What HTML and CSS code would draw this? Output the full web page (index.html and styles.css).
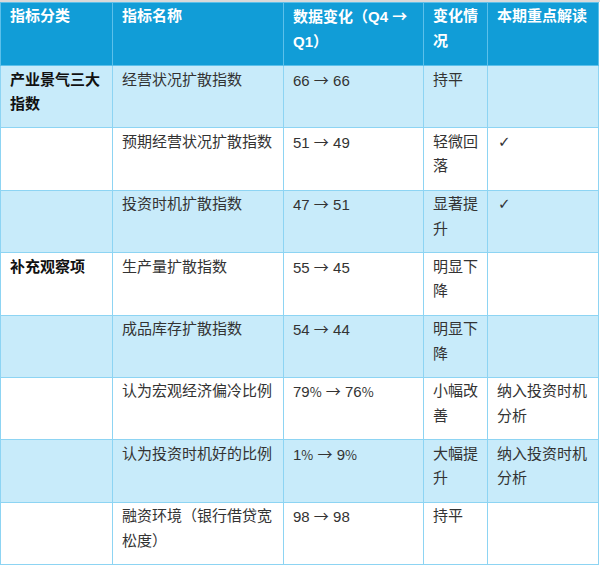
FILE: index.html
```html
<!DOCTYPE html>
<html lang="zh-CN">
<head>
<meta charset="utf-8">
<title>指标表</title>
<link rel="stylesheet" href="styles.css">
</head>
<body>
<div class="wrap">
<table class="tbl">
<colgroup>
<col class="c1"><col class="c2"><col class="c3"><col class="c4"><col class="c5">
</colgroup>
<thead>
<tr><th>指标分类</th><th>指标名称</th><th>数据变化（Q4 <span class="arr">→</span> Q1）</th><th>变化情况</th><th>本期重点解读</th></tr>
</thead>
<tbody>
<tr class="alt"><td class="cat">产业景气三大指数</td><td>经营状况扩散指数</td><td>66 <span class="arr">→</span> 66</td><td>持平</td><td></td></tr>
<tr><td class="cat"></td><td>预期经营状况扩散指数</td><td>51 <span class="arr">→</span> 49</td><td>轻微回落</td><td><span class="chk">✓</span></td></tr>
<tr class="alt"><td class="cat"></td><td>投资时机扩散指数</td><td>47 <span class="arr">→</span> 51</td><td>显著提升</td><td><span class="chk">✓</span></td></tr>
<tr><td class="cat">补充观察项</td><td>生产量扩散指数</td><td>55 <span class="arr">→</span> 45</td><td>明显下降</td><td></td></tr>
<tr class="alt"><td class="cat"></td><td>成品库存扩散指数</td><td>54 <span class="arr">→</span> 44</td><td>明显下降</td><td></td></tr>
<tr><td class="cat"></td><td>认为宏观经济偏冷比例</td><td>79<span class="pct">%</span> <span class="arr">→</span> 76<span class="pct">%</span></td><td>小幅改善</td><td>纳入投资时机分析</td></tr>
<tr class="alt"><td class="cat"></td><td>认为投资时机好的比例</td><td>1<span class="pct">%</span> <span class="arr">→</span> 9<span class="pct">%</span></td><td>大幅提升</td><td>纳入投资时机分析</td></tr>
<tr><td class="cat"></td><td>融资环境（银行借贷宽松度）</td><td>98 <span class="arr">→</span> 98</td><td>持平</td><td></td></tr>
</tbody>
</table>
</div>
</body>
</html>
```
FILE: styles.css
```css
html, body {
  margin: 0;
  padding: 0;
  background: #ffffff;
}
.wrap {
  border-top: 2px solid #d9d9d9;
  width: 600px;
}
.tbl {
  border-collapse: collapse;
  table-layout: fixed;
  width: 598px;
  font-family: "Liberation Sans", "Noto Sans CJK SC", sans-serif;
  font-size: 15px;
  line-height: 24.5px;
  color: #333333;
}
.c1 { width: 112px; }
.c2 { width: 171px; }
.c3 { width: 140px; }
.c4 { width: 64px; }
.c5 { width: 111px; }
.tbl th, .tbl td {
  border: 1px solid #8dd4f3;
  padding: 1.5px 8px 10.9px 9px;
  vertical-align: top;
  text-align: left;
  height: 49px;
  box-sizing: content-box;
}
.tbl th {
  background: #119dd7;
  color: #ffffff;
  font-weight: bold;
  border-color: #5cc0ea;
  padding-top: 1px;
  padding-bottom: 11px;
}
.tbl tr.alt td {
  background: #c8ebfa;
}
.tbl td.cat {
  font-weight: bold;
  color: #111111;
}
.arr {
  font-family: "Noto Sans CJK SC", sans-serif;
  font-weight: normal;
}
.tbl th .arr {
  font-weight: bold;
}
.pct {
  font-family: "Noto Sans CJK SC", sans-serif;
  font-size: 13px;
}
.chk {
  font-family: "DejaVu Sans", sans-serif;
  font-size: 15px;
  padding-left: 1px;
}
```
